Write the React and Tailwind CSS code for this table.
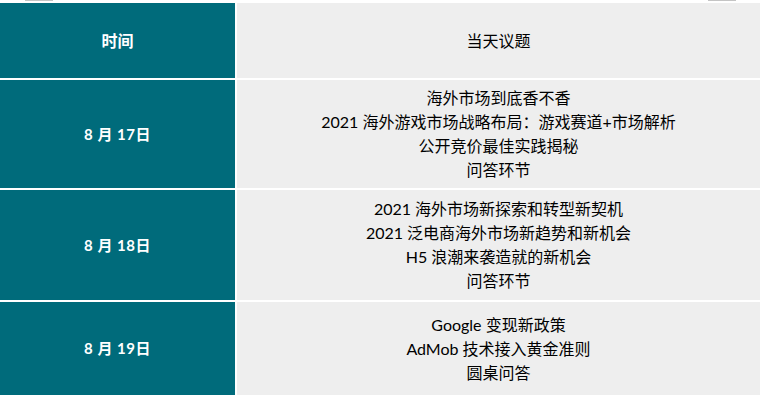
import React from "react";

const schedule = [
  {
    date: "8 月 17日",
    height: "h-[108px]",
    topics: [
      "海外市场到底香不香",
      "2021 海外游戏市场战略布局：游戏赛道+市场解析",
      "公开竞价最佳实践揭秘",
      "问答环节",
    ],
  },
  {
    date: "8 月 18日",
    height: "h-[110px]",
    topics: [
      "2021 海外市场新探索和转型新契机",
      "2021 泛电商海外市场新趋势和新机会",
      "H5 浪潮来袭造就的新机会",
      "问答环节",
    ],
  },
  {
    date: "8 月 19日",
    height: "h-[93px]",
    topics: ["Google 变现新政策", "AdMob 技术接入黄金准则", "圆桌问答"],
  },
];

export default function App() {
  return (
    <div className="w-[760px] h-[395px] overflow-hidden bg-white font-['Lato','Noto_Sans_CJK_SC',sans-serif]">
      {/* faint marks along the top edge */}
      <div className="h-[3px] flex items-start">
        <div className="ml-[25px] w-[28px] h-[1px] bg-[#c4c4c4]" />
        <div className="ml-[655px] w-[28px] h-[1px] bg-[#c4c4c4]" />
      </div>

      <div className="grid grid-cols-[235px_1fr] gap-[2px]">
        <div className="h-[75px] bg-[#006b7b] flex items-center justify-center text-white font-bold text-[16px]">
          时间
        </div>
        <div className="h-[75px] bg-[#eeeeee] flex items-center justify-center text-black text-[16px]">
          当天议题
        </div>

        {schedule.map((day) => (
          <React.Fragment key={day.date}>
            <div
              className={`${day.height} bg-[#006b7b] flex items-center justify-center text-white font-bold text-[15px] tracking-[0.5px]`}
            >
              {day.date}
            </div>
            <div
              className={`${day.height} bg-[#eeeeee] flex flex-col items-center justify-center text-black text-[16px] leading-[24px]`}
            >
              {day.topics.map((t) => (
                <div key={t}>{t}</div>
              ))}
            </div>
          </React.Fragment>
        ))}
      </div>
    </div>
  );
}
